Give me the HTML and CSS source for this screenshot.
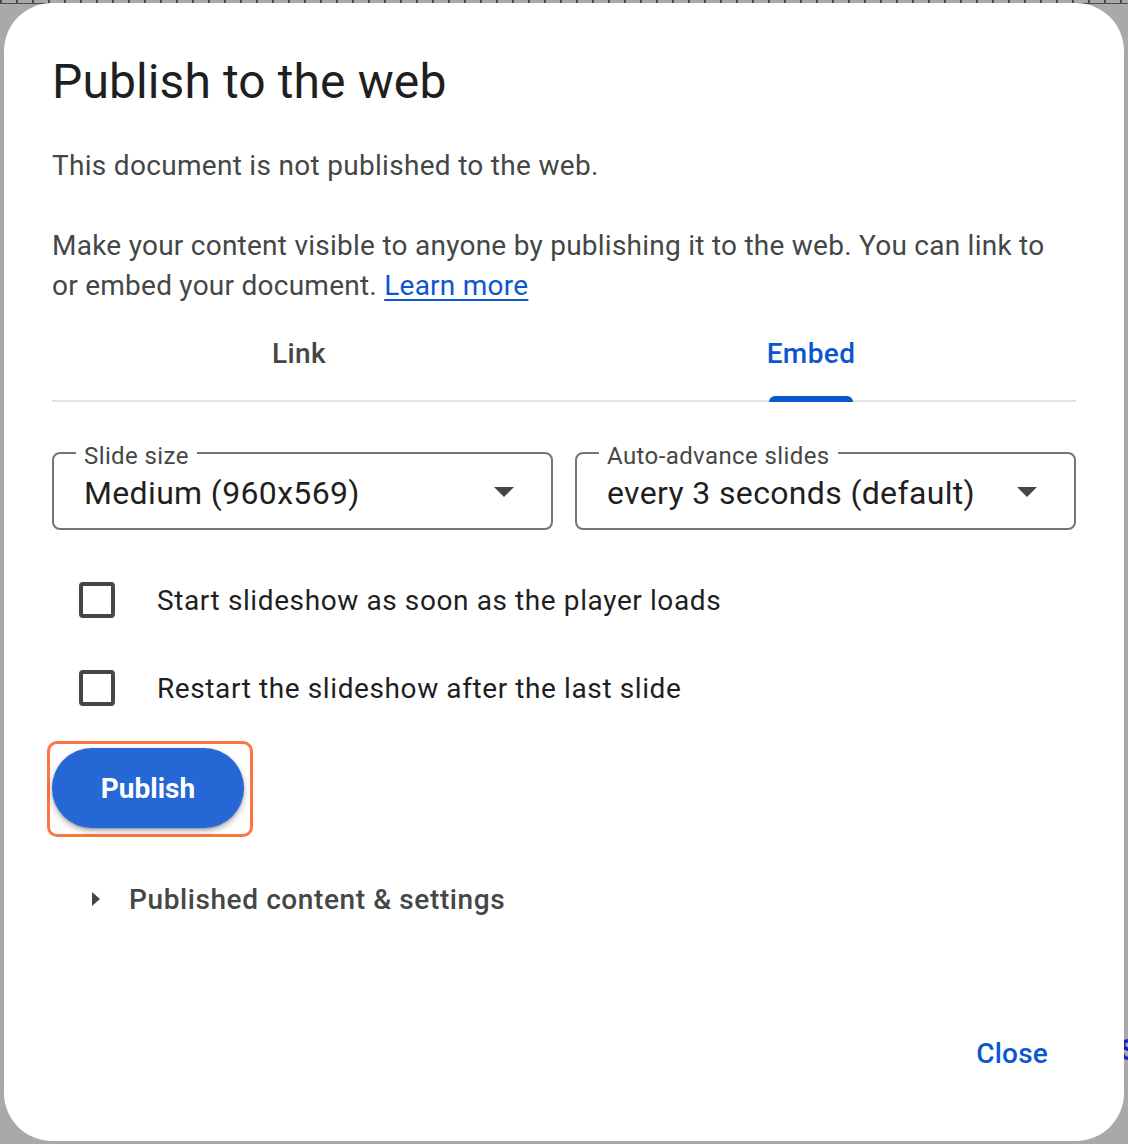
FILE: index.html
```html
<!DOCTYPE html>
<html lang="en">
<head>
<meta charset="utf-8">
<title>Publish to the web</title>
<link rel="stylesheet" href="styles.css">
</head>
<body>
<div class="ruler"></div>
<span class="behind-text">S</span>
<div class="dialog">
  <h1 class="title">Publish to the web</h1>
  <p class="status">This document is not published to the web.</p>
  <p class="desc">Make your content visible to anyone by publishing it to the web. You can link to or embed your document. <a href="#" class="link">Learn more</a></p>

  <div class="tabs">
    <div class="tab">Link</div>
    <div class="tab active"><span class="tab-label">Embed<span class="indicator"></span></span></div>
  </div>

  <div class="fields">
    <div class="select">
      <span class="select-label">Slide size</span>
      <span class="select-value">Medium (960x569)</span>
      <span class="caret"></span>
    </div>
    <div class="select">
      <span class="select-label">Auto-advance slides</span>
      <span class="select-value">every 3 seconds (default)</span>
      <span class="caret"></span>
    </div>
  </div>

  <div class="checks">
    <label class="check"><span class="box"></span><span class="check-text">Start slideshow as soon as the player loads</span></label>
    <label class="check"><span class="box"></span><span class="check-text">Restart the slideshow after the last slide</span></label>
  </div>

  <div class="publish-wrap">
    <button class="publish">Publish</button>
  </div>

  <div class="expander">
    <span class="expander-arrow"></span>
    <span class="expander-text">Published content &amp; settings</span>
  </div>

  <div class="footer">
    <button class="close">Close</button>
  </div>
</div>
</body>
</html>
```

FILE: styles.css
```css
html, body {
  margin: 0;
  padding: 0;
}
body {
  width: 1128px;
  height: 1144px;
  background: #a8a9aa;
  font-family: Roboto, "Liberation Sans", Arial, sans-serif;
  position: relative;
  overflow: hidden;
}
.ruler {
  height: 3px;
  background:
    repeating-linear-gradient(90deg, #4a4a4a 0 2px, #a9a9a9 2px 16px);
  border-bottom: 1px solid #4a4a4a;
}
.behind-text {
  position: absolute;
  left: 1119px;
  top: 1030px;
  font-size: 30px;
  line-height: 40px;
  font-weight: 700;
  color: #1a1ad0;
}
.dialog {
  position: absolute;
  left: 4px;
  top: 3px;
  width: 1120px;
  height: 1138px;
  box-sizing: border-box;
  background: #ffffff;
  border-radius: 48px;
  padding: 51px 48px 60px 48px;
  display: flex;
  flex-direction: column;
}
.title {
  margin: 0;
  font-size: 48px;
  line-height: 56px;
  font-weight: 400;
  letter-spacing: 0.1px;
  color: #1f1f1f;
}
.status {
  margin: 36px 0 0;
  font-size: 28px;
  line-height: 40px;
  letter-spacing: 0.3px;
  color: #444746;
}
.desc {
  margin: 40px 0 0;
  font-size: 28px;
  line-height: 40px;
  letter-spacing: 0.25px;
  color: #444746;
  padding-right: 8px;
}
.link {
  color: #0b57d0;
  text-decoration: underline;
  text-underline-offset: 4px;
}
.tabs {
  display: flex;
  height: 96px;
  box-sizing: border-box;
  border-bottom: 2px solid #e3e3e3;
}
.tab {
  flex: 1;
  display: flex;
  align-items: center;
  justify-content: center;
  padding-right: 18px;
  font-size: 28px;
  font-weight: 500;
  letter-spacing: 0.4px;
  color: #444746;
}
.tab.active {
  color: #0b57d0;
  align-items: stretch;
}
.tab-label {
  position: relative;
  display: flex;
  align-items: center;
}
.indicator {
  position: absolute;
  left: 50%;
  bottom: -2px;
  width: 84px;
  margin-left: -42px;
  height: 6px;
  background: #0b57d0;
  border-radius: 6px 6px 0 0;
}
.fields {
  display: flex;
  gap: 22px;
  margin-top: 50px;
}
.select {
  flex: 1;
  position: relative;
  height: 78px;
  box-sizing: border-box;
  border: 2px solid #747775;
  border-radius: 8px;
  display: flex;
  align-items: center;
  padding: 0 30px;
}
.select-label {
  position: absolute;
  left: 22px;
  top: -12px;
  padding: 0 8px;
  background: #ffffff;
  font-size: 24px;
  line-height: 28px;
  letter-spacing: 0.4px;
  color: #444746;
}
.select-value {
  flex: 1;
  font-size: 32px;
  line-height: 40px;
  letter-spacing: 0.35px;
  color: #1f1f1f;
  padding-top: 4px;
}
.caret {
  width: 0;
  height: 0;
  border-left: 10px solid transparent;
  border-right: 10px solid transparent;
  border-top: 10px solid #444746;
  margin-right: 7px;
  margin-top: 2px;
}
.checks {
  margin-top: 26px;
  display: flex;
  flex-direction: column;
}
.check {
  display: flex;
  align-items: center;
  height: 88px;
}
.box {
  width: 36px;
  height: 36px;
  box-sizing: border-box;
  border: 4px solid #444746;
  border-radius: 4px;
  margin-left: 27px;
  margin-right: 42px;
}
.check-text {
  font-size: 28px;
  letter-spacing: 0.6px;
  color: #1f1f1f;
}
.publish-wrap {
  position: relative;
  margin-top: 16px;
  align-self: flex-start;
}
.publish-wrap::before {
  content: "";
  position: absolute;
  left: -5px;
  top: -7px;
  right: -9px;
  bottom: -9px;
  border: 3px solid #ff7443;
  border-radius: 10px;
}
.publish {
  position: relative;
  display: block;
  width: 192px;
  height: 80px;
  border: none;
  border-radius: 40px;
  background: #2567d4;
  color: #ffffff;
  font-family: inherit;
  font-size: 28px;
  font-weight: 700;
  box-shadow: 0 3px 6px rgba(0, 0, 0, 0.3), 0 1px 2px rgba(0, 0, 0, 0.2);
}
.expander {
  margin-top: 47px;
  height: 48px;
  display: flex;
  align-items: center;
}
.expander-arrow {
  width: 0;
  height: 0;
  border-top: 7px solid transparent;
  border-bottom: 7px solid transparent;
  border-left: 8px solid #444746;
  margin-left: 40px;
  margin-right: 29px;
}
.expander-text {
  font-size: 28px;
  font-weight: 500;
  letter-spacing: 0.6px;
  color: #444746;
}
.footer {
  margin-top: auto;
  display: flex;
  justify-content: flex-end;
}
.close {
  height: 56px;
  border: none;
  background: transparent;
  padding: 0 28px 0 24px;
  font-family: inherit;
  font-size: 28px;
  font-weight: 500;
  letter-spacing: 0.2px;
  color: #0b57d0;
}
```
